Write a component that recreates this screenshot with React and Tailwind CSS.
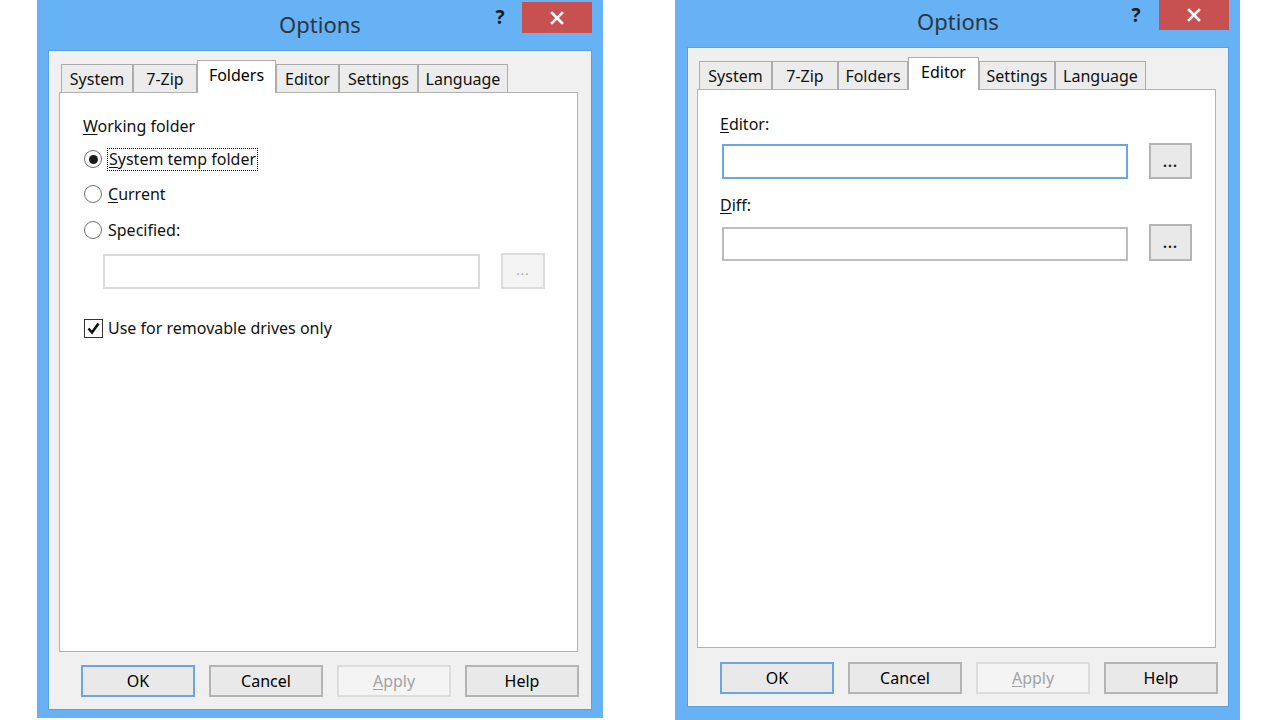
const FONT = { fontFamily: '"Noto Sans", "Open Sans", sans-serif' };

function TitleBar({ height, titleTop, closeTop, closeHeight, helpWidth }) {
  return (
    <div className="flex shrink-0" style={{ height }}>
      <div className="flex-1" />
      <div
        className="text-[22px] leading-[30px] text-[#2b3743]"
        style={{ marginTop: titleTop }}
      >
        Options
      </div>
      <div className="flex flex-1 items-start justify-end">
        <div
          className="flex items-center justify-center text-[19px] font-bold text-[#1c1c1c]"
          style={{ width: helpWidth, height: closeHeight, marginTop: closeTop }}
        >
          ?
        </div>
        <div
          className="flex w-[70px] items-center justify-center bg-[#c75050]"
          style={{ height: closeHeight, marginTop: closeTop }}
        >
          <svg width="14" height="14" viewBox="0 0 14 14">
            <path
              d="M2 2 L12 12 M12 2 L2 12"
              stroke="white"
              strokeWidth="2.6"
              strokeLinecap="square"
            />
          </svg>
        </div>
      </div>
    </div>
  );
}

function TabStrip({ tabs, active, height }) {
  return (
    <div className="flex items-end pl-[2px]" style={{ height }}>
      {tabs.map(([label, width]) =>
        label === active ? (
          <div
            key={label}
            className="relative z-10 -mb-px flex h-[33px] items-center justify-center border border-b-0 border-[#acacac] bg-white pb-[4px] text-[16px] text-black"
            style={{ width }}
          >
            {label}
          </div>
        ) : (
          <div
            key={label}
            className="flex h-[28px] items-center justify-center border border-b-0 border-[#acacac] bg-[#ececec] text-[16px] text-[#111]"
            style={{ width }}
          >
            {label}
          </div>
        ),
      )}
    </div>
  );
}

function DialogButtons({ top, right }) {
  const base =
    "flex h-[32px] w-[114px] items-center justify-center border-2 text-[16px]";
  return (
    <div
      className="flex justify-end gap-[14px]"
      style={{ marginTop: top, paddingRight: right }}
    >
      <div className={`${base} border-[#6aa7e2] bg-[#e9e9e9] text-black`}>OK</div>
      <div className={`${base} border-[#b4b4b4] bg-[#e9e9e9] text-black`}>
        Cancel
      </div>
      <div className={`${base} border-[#dcdcdc] bg-[#f4f4f4] text-[#a3a3a3]`}>
        <span>
          <u className="underline-offset-2">A</u>pply
        </span>
      </div>
      <div className={`${base} border-[#b4b4b4] bg-[#e9e9e9] text-black`}>Help</div>
    </div>
  );
}

function Radio({ checked }) {
  return (
    <span className="ml-[1px] flex h-[18px] w-[18px] items-center justify-center rounded-full border border-[#6f6f6f] bg-white">
      {checked && <span className="h-[9px] w-[9px] rounded-full bg-[#1a1a1a]" />}
    </span>
  );
}

function FoldersPanel() {
  return (
    <div className="h-[560px] w-[519px] border border-[#b2b2b2] bg-white pl-[23px] pt-[23px] text-[16px] text-[#111]">
      <div className="h-[20px] leading-[20px]">
        <u className="underline-offset-2">W</u>orking folder
      </div>
      <div className="mt-[11px] flex h-[24px] items-center gap-[5px]">
        <Radio checked />
        <span className="border border-dotted border-black px-[1px] leading-[21px]">
          <u className="underline-offset-2">S</u>ystem temp folder
        </span>
      </div>
      <div className="mt-[11px] flex h-[24px] items-center gap-[6px]">
        <Radio />
        <span>
          <u className="underline-offset-2">C</u>urrent
        </span>
      </div>
      <div className="mt-[12px] flex h-[24px] items-center gap-[6px]">
        <Radio />
        <span>Specified:</span>
      </div>
      <div className="mt-[11px] flex items-end">
        <div className="ml-[20px] h-[35px] w-[377px] border-2 border-[#dadada] bg-white" />
        <div className="ml-[21px] flex h-[36px] w-[44px] items-center justify-center border-2 border-[#dcdcdc] bg-[#f4f4f4] text-[13px] tracking-[1px] text-[#a3a3a3]">
          ...
        </div>
      </div>
      <div className="mt-[27px] flex h-[24px] items-center gap-[5px]">
        <span className="ml-[1px] flex h-[19px] w-[19px] items-center justify-center border border-[#333] bg-white">
          <svg width="15" height="15" viewBox="0 0 15 15">
            <path
              d="M2.5 7.5 L6 11.5 L12.5 2.5"
              fill="none"
              stroke="#111"
              strokeWidth="2.6"
            />
          </svg>
        </span>
        <span>Use for removable drives only</span>
      </div>
    </div>
  );
}

function EditorPanel() {
  const dots =
    "ml-[21px] flex w-[43px] items-center justify-center border-2 border-[#b4b4b4] bg-[#e9e9e9] text-[14px] font-bold tracking-[1px] text-[#222]";
  return (
    <div className="h-[559px] w-[519px] border border-[#b2b2b2] bg-white pl-[22px] pt-[24px] text-[16px] text-[#111]">
      <div className="h-[20px] leading-[20px]">
        <u className="underline-offset-2">E</u>ditor:
      </div>
      <div className="mt-[9px] flex items-end">
        <div className="ml-[2px] h-[35px] w-[406px] border-2 border-[#6aa7e2] bg-white" />
        <div className={`${dots} h-[36px]`}>...</div>
      </div>
      <div className="mt-[16px] h-[20px] leading-[20px]">
        <u className="underline-offset-2">D</u>iff:
      </div>
      <div className="mt-[9px] flex items-end">
        <div className="ml-[2px] h-[34px] w-[406px] border-2 border-[#bcbcbc] bg-white" />
        <div className={`${dots} h-[37px]`}>...</div>
      </div>
    </div>
  );
}

const LEFT_TABS = [
  ["System", 72],
  ["7-Zip", 64],
  ["Folders", 79],
  ["Editor", 63],
  ["Settings", 79],
  ["Language", 90],
];

const RIGHT_TABS = [
  ["System", 73],
  ["7-Zip", 66],
  ["Folders", 70],
  ["Editor", 71],
  ["Settings", 76],
  ["Language", 91],
];

export default function App() {
  return (
    <div
      className="flex h-[720px] w-[1280px] items-start overflow-hidden bg-white"
      style={FONT}
    >
      <div className="ml-[37px] flex h-[718px] w-[566px] flex-col bg-[#67b1f5] px-[11px] pb-[8px]">
        <TitleBar
          height={50}
          titleTop={9}
          closeTop={2}
          closeHeight={31}
          helpWidth={44}
        />
        <div className="flex-1 border border-[#5a9fe0] bg-[#f0f0f0] pt-[10px]">
          <div className="ml-[10px]">
            <TabStrip tabs={LEFT_TABS} active="Folders" height={31} />
            <FoldersPanel />
          </div>
          <DialogButtons top={13} right={12} />
        </div>
      </div>

      <div className="ml-[72px] flex h-[720px] w-[565px] flex-col bg-[#67b1f5] pb-[13px] pl-[12px] pr-[11px]">
        <TitleBar
          height={47}
          titleTop={6}
          closeTop={0}
          closeHeight={30}
          helpWidth={46}
        />
        <div className="flex-1 border border-[#5a9fe0] bg-[#f0f0f0] pt-[9px]">
          <div className="ml-[9px]">
            <TabStrip tabs={RIGHT_TABS} active="Editor" height={32} />
            <EditorPanel />
          </div>
          <DialogButtons top={14} right={10} />
        </div>
      </div>
    </div>
  );
}
